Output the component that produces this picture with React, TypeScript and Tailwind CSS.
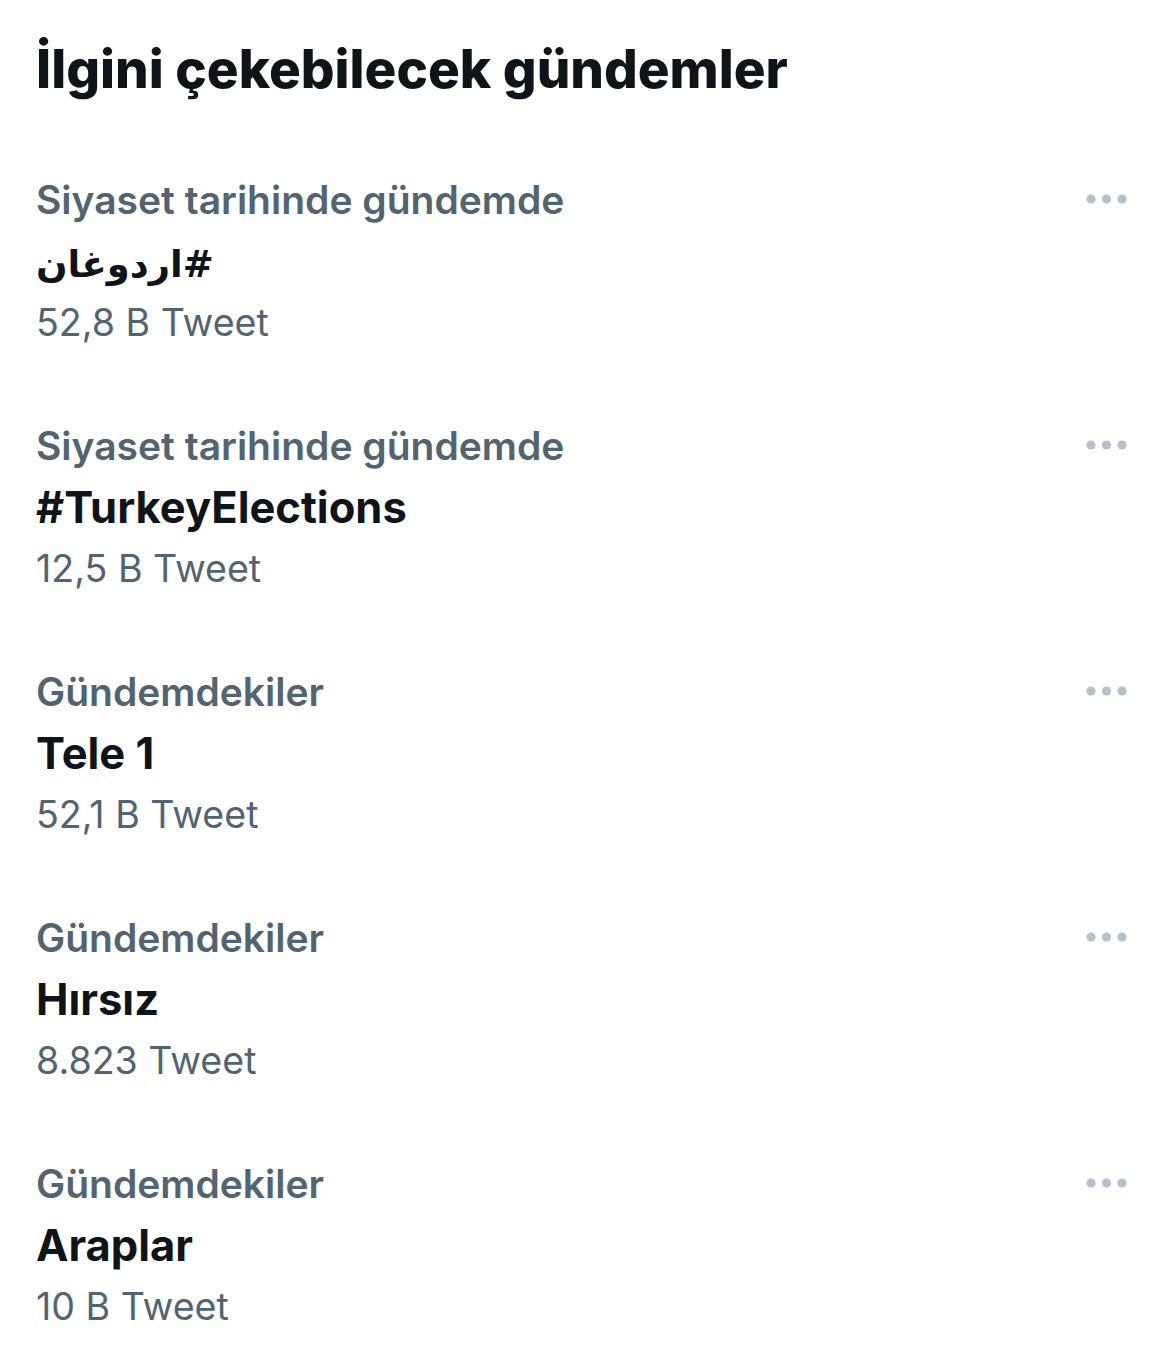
type Trend = {
  category: string;
  name: string;
  count: string;
  rtl?: boolean;
};

const trends: Trend[] = [
  { category: "Siyaset tarihinde gündemde", name: "#اردوغان", count: "52,8 B Tweet", rtl: true },
  { category: "Siyaset tarihinde gündemde", name: "#TurkeyElections", count: "12,5 B Tweet" },
  { category: "Gündemdekiler", name: "Tele 1", count: "52,1 B Tweet" },
  { category: "Gündemdekiler", name: "Hırsız", count: "8.823 Tweet" },
  { category: "Gündemdekiler", name: "Araplar", count: "10 B Tweet" },
];

const Dots = () => (
  <svg width="46" height="10" viewBox="0 0 46 10" className="mt-[24px] shrink-0">
    <circle cx="5" cy="5" r="4.6" fill="#b4c0ca" />
    <circle cx="20.5" cy="5" r="4.6" fill="#b4c0ca" />
    <circle cx="36" cy="5" r="4.6" fill="#b4c0ca" />
  </svg>
);

const TrendRow = ({ trend }: { trend: Trend }) => (
  <div className="flex items-start justify-between py-[33px] pl-9 pr-[38px]">
    <div className="flex flex-col">
      <span className="h-[60px] text-[39px] leading-[60px] font-semibold text-[#536471]">{trend.category}</span>
      <span className="h-[60px] pt-[1px] text-[43.5px] leading-[60px] font-bold text-[#0f1419]">
        {trend.rtl ? (
          <span
            dir="rtl"
            className="text-[37px] leading-[60px]"
            style={{ fontFamily: '"DejaVu Sans", sans-serif' }}
          >
            {trend.name}
          </span>
        ) : (
          trend.name
        )}
      </span>
      <span className="h-[60px] pt-[3px] text-[37.6px] leading-[60px] font-normal text-[#536471]">
        {trend.count}
      </span>
    </div>
    <Dots />
  </div>
);

export default function App() {
  return (
    <div
      className="min-h-screen w-[1170px] bg-white"
      style={{ fontFamily: 'Inter, "Noto Sans", "DejaVu Sans", sans-serif' }}
    >
      <h1 className="pl-9 pt-[33px] pb-[32px] text-[53px] leading-[72px] font-extrabold text-[#0f1419]">
        İlgini çekebilecek gündemler
      </h1>
      <div className="flex flex-col">
        {trends.map((t, i) => (
          <TrendRow key={i} trend={t} />
        ))}
      </div>
    </div>
  );
}
